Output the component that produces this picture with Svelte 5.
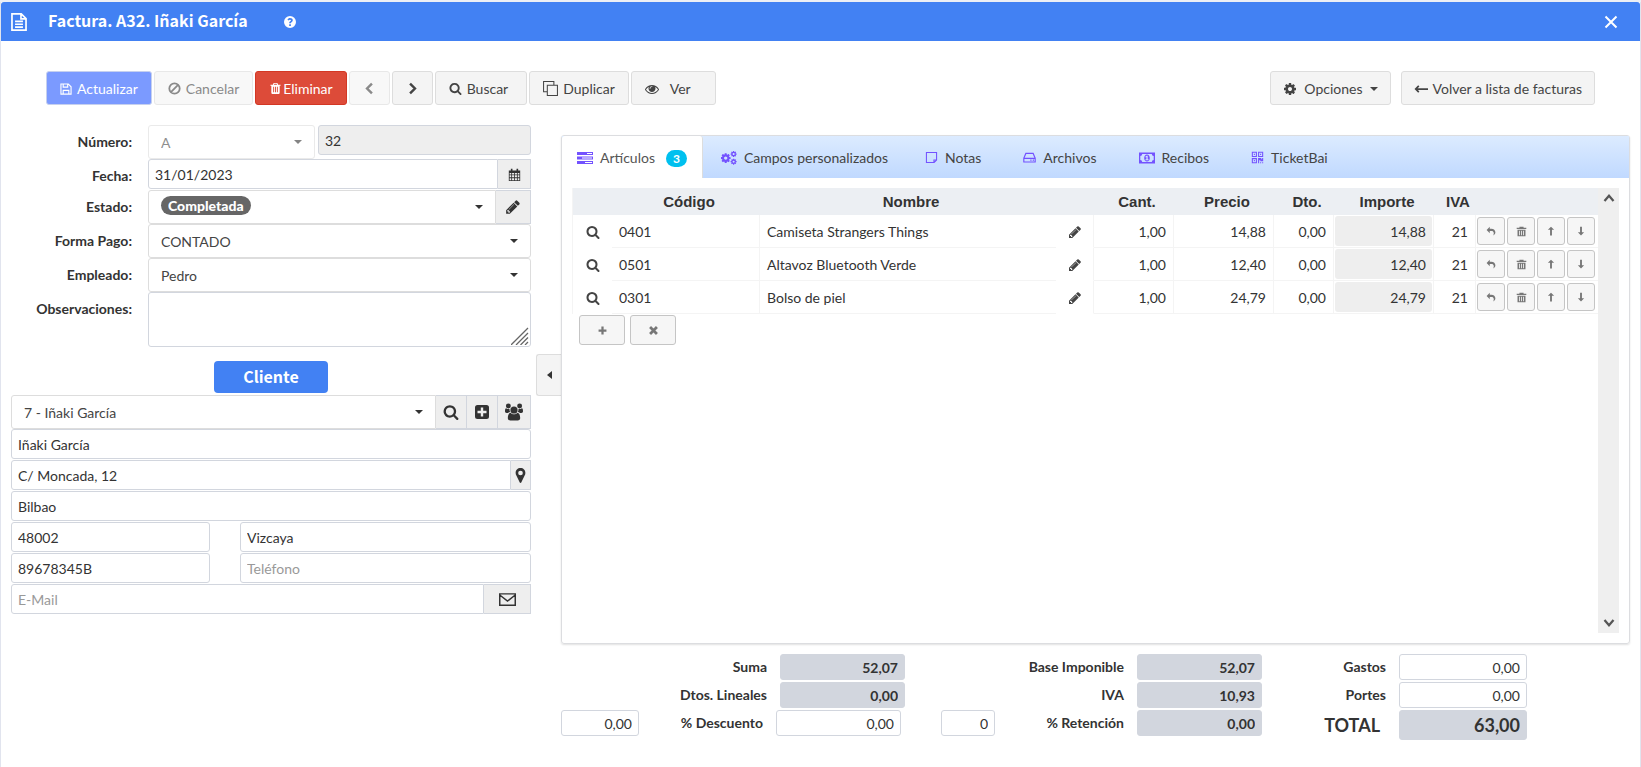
<script>
  const lines = [
    { code: '0401', name: 'Camiseta Strangers Things', qty: '1,00', price: '14,88', disc: '0,00', total: '14,88', vat: '21' },
    { code: '0501', name: 'Altavoz Bluetooth Verde', qty: '1,00', price: '12,40', disc: '0,00', total: '12,40', vat: '21' },
    { code: '0301', name: 'Bolso de piel', qty: '1,00', price: '24,79', disc: '0,00', total: '24,79', vat: '21' }
  ];

  const tabs = [
    { icon: 'tasks', label: 'Artículos', badge: 3 },
    { icon: 'cogs', label: 'Campos personalizados', wide: true },
    { icon: 'note', label: 'Notas' },
    { icon: 'drive', label: 'Archivos' },
    { icon: 'money', label: 'Recibos' },
    { icon: 'qr', label: 'TicketBai' }
  ];

  const rowActions = [
    { icon: 'undo', label: 'Deshacer' },
    { icon: 'bin', label: 'Borrar línea' },
    { icon: 'up', label: 'Subir' },
    { icon: 'down', label: 'Bajar' }
  ];

  // Solid glyphs, drawn on a 1792-unit grid
  const solid = {
    search: 'M1216 832q0-185-131.5-316.5t-316.5-131.5-316.5 131.5-131.5 316.5 131.5 316.5 316.5 131.5 316.5-131.5 131.5-316.5zm512 832q0 52-38 90t-90 38q-54 0-90-38l-343-342q-179 124-399 124-143 0-273.5-55.5t-225-150-150-225-55.5-273.5 55.5-273.5 150-225 225-150 273.5-55.5 273.5 55.5 225 150 150 225 55.5 273.5q0 220-124 399l343 343q37 37 37 90z',
    pencil: 'M491 1536l91-91-235-235-91 91v107h128v128h107zm523-928q0-22-22-22-10 0-17 7l-542 542q-7 7-7 17 0 22 22 22 10 0 17-7l542-542q7-7 7-17zm-54-192l416 416-832 832h-416v-416zm683 96q0 53-37 90l-166 166-416-416 166-165q36-38 90-38 53 0 91 38l235 234q37 39 37 91z',
    trash: 'M704 1376v-704q0-14-9-23t-23-9h-64q-14 0-23 9t-9 23v704q0 14 9 23t23 9h64q14 0 23-9t9-23zm256 0v-704q0-14-9-23t-23-9h-64q-14 0-23 9t-9 23v704q0 14 9 23t23 9h64q14 0 23-9t9-23zm256 0v-704q0-14-9-23t-23-9h-64q-14 0-23 9t-9 23v704q0 14 9 23t23 9h64q14 0 23-9t9-23zm-544-992h448l-48-117q-7-9-17-11h-317q-10 2-17 11zm928 32v64q0 14-9 23t-23 9h-96v948q0 83-47 143.5t-113 60.5h-832q-66 0-113-58.5t-47-141.5v-952h-96q-14 0-23-9t-9-23v-64q0-14 9-23t23-9h309l70-167q15-37 54-63t79-26h320q40 0 79 26t54 63l70 167h309q14 0 23 9t9 23z',
    eye: 'M1664 960q-152-236-381-353 61 104 61 225 0 185-131.5 316.5t-316.5 131.5-316.5-131.5-131.5-316.5q0-121 61-225-229 117-381 353 133 205 333.5 326.5t434.5 121.5 434.5-121.5 333.5-326.5zm-720-384q0-20-14-34t-34-14q-125 0-214.5 89.5t-89.5 214.5q0 20 14 34t34 14 34-14 14-34q0-86 61-147t147-61q20 0 34-14t14-34zm848 384q0 34-20 69-140 230-376.5 368.5t-499.5 138.5-499.5-139-376.5-368q-20-35-20-69t20-69q140-229 376.5-368t499.5-139 499.5 139 376.5 368q20 35 20 69z',
    cog: 'M1152 896q0-106-75-181t-181-75-181 75-75 181 75 181 181 75 181-75 75-181zm512-109v222q0 12-8 23t-20 13l-185 28q-19 54-39 91 35 50 107 138 10 12 10 25t-9 23q-27 37-99 108t-94 71q-12 0-26-9l-138-108q-44 23-91 38-16 136-29 186-7 28-36 28h-222q-14 0-24.5-8.5t-11.5-21.5l-28-184q-49-16-90-37l-141 107q-10 9-25 9-14 0-25-11-126-114-165-168-7-10-7-23 0-12 8-23 15-21 51-66.5t54-70.5q-27-50-41-99l-183-27q-13-2-21-12.5t-8-23.5v-222q0-12 8-23t19-13l186-28q14-46 39-92-40-57-107-138-10-12-10-24 0-10 9-23 26-36 98.5-107.5t94.5-71.5q13 0 26 10l138 107q44-23 91-38 16-136 29-186 7-28 36-28h222q14 0 24.5 8.5t11.5 21.5l28 184q49 16 90 37l142-107q9-9 24-9 13 0 25 10 129 119 165 170 7 8 7 22 0 12-8 23-15 21-51 66.5t-54 70.5q26 50 41 98l183 28q13 2 21 12.5t8 23.5z'
  };

  // Line glyphs on a 16-unit grid
  const stroked = {
    file: { w: 1.5, d: 'M1.75 .75H10L14.25 5V15.25H1.75zM9.75 1V5.25H14M4.5 7.5h7M4.5 10h7M4.5 12.5h7' },
    floppy: { w: 1.5, d: 'M1.25 1.25H11L14.75 5V14.75H1.25zM4.25 14.5V9.75h7.5v4.75M4.25 1.5v4h6v-4' },
    ban: { w: 2.2, d: 'M14.4 8a6.4 6.4 0 1 1-12.8 0a6.4 6.4 0 1 1 12.8 0zM3.6 12.4L12.4 3.6' },
    prev: { w: 3, d: 'M11 2L5 8l6 6' },
    next: { w: 3, d: 'M5 2l6 6-6 6' },
    copy: { w: 1.1, d: 'M4.6 4.6h10.8v10.8H4.6zM4.6 11.5h-4V.6h11v4' },
    back: { w: 2, d: 'M2 8H16M5.5 4.5L2 8l3.5 3.5' },
    close: { w: 2, d: 'M2.5 2.5l11 11M13.5 2.5l-11 11' },
    note: { w: 1.3, d: 'M1.75 1.75h12.5v9.5l-3 3h-9.500zM14 11h-3v3' },
    drive: { w: 1.4, d: 'M1 9l2.500-6h9L15 9M1 9h14v4.500H1zM9 11.300h1.500M12 11.300h1.500' },
    envelope: { w: 1.4, d: 'M.7 2.700h14.600v10.600H.7zM1 4l7 5.500L15 4' },
    plus: { w: 4, d: 'M8 1v14M1 8h14' },
    times: { w: 4, d: 'M3 3l10 10M13 3L3 13' },
    chevup: { w: 3, d: 'M2 12l6-7 6 7' },
    chevdown: { w: 3, d: 'M2 4l6 7 6-7' }
  };

  // Filled glyphs on a 16-unit grid
  const filled = {
    tasks: 'M0 2h16v3H0zM0 6.500h16v3H0zM0 11h16v3H0zM10 3v1h5V3zM5 7.500v1h10v-1zM8 12v1h7v-1z',
    help: 'M8 0a8 8 0 1 0 0 16A8 8 0 0 0 8 0zM6.900 11h2.300v2.300H6.900zM8 2.800c2.200 0 3.700 1.200 3.700 3 0 1.500-1 2.100-1.700 2.600-.6.400-.8.600-.8 1.400H6.900c0-1.600.7-2.200 1.500-2.700.6-.4.900-.6.900-1.200 0-.6-.5-1-1.300-1-.8 0-1.200.4-1.800 1.200L4.600 5C5.400 3.600 6.400 2.800 8 2.800z',
    marker: 'M8 0C5 0 2.800 2.200 2.800 5.200c0 1.200.4 2 .8 2.900L7.200 15.500c.3.600 1.300.6 1.600 0l3.600-7.400c.4-.9.800-1.700.8-2.900C13.200 2.200 11 0 8 0zM8 2.800a2.500 2.500 0 1 1 0 5a2.500 2.500 0 1 1 0-5z',
    addbox: 'M3.500 1h9A2.500 2.500 0 0 1 15 3.500v9a2.500 2.500 0 0 1-2.500 2.500h-9A2.500 2.500 0 0 1 1 12.500v-9A2.500 2.500 0 0 1 3.500 1zM6.800 3.500v3.300H3.500v2.400h3.300v3.300h2.400V9.200h3.300V6.800H9.200V3.500z',
    users: 'M8 3a3.200 3.200 0 1 1 0 6.400A3.200 3.200 0 0 1 8 3zM5 8.700c.8.900 1.800 1.400 3 1.400s2.200-.5 3-1.400c1.600.2 2.500 2 2.500 4.600 0 1.300-.8 2.200-2.200 2.200H4.700c-1.400 0-2.200-.9-2.200-2.200 0-2.600.9-4.400 2.500-4.600zM3 .500a2.200 2.200 0 1 1 0 4.400a2.200 2.200 0 0 1 0-4.400zM13 .500a2.200 2.200 0 1 1 0 4.400a2.200 2.200 0 0 1 0-4.400zM1 4.600c1 .8 2 .9 3 .7 0 1.300.2 2 .7 2.800-.8 0-1.500.3-2 .8H1.500C.5 8.900 0 8.300 0 7.400 0 6 .2 4.800 1 4.600zM15 4.600c-1 .8-2 .9-3 .7 0 1.300-.2 2-.7 2.800.8 0 1.500.3 2 .8h1.200c1 0 1.500-.6 1.500-1.500 0-1.400-.2-2.600-1-2.800z',
    calendar: 'M1 3h2.500V.8h2V3h5V.8h2V3H15v13H1zM2 6v2h2V6zM5 6v2h2.500V6zM8.500 6v2H11V6zM12 6v2h2V6zM2 9v2.500h2V9zM5 9v2.500h2.500V9zM8.500 9v2.500H11V9zM12 9v2.500h2V9zM2 12.500V15h2v-2.500zM5 12.500V15h2.500v-2.500zM8.500 12.500V15H11v-2.500zM12 12.500V15h2v-2.500z',
    money: 'M0 2.500h16v11H0zM3.200 4a2 2 0 0 1-1.900 1.900v4.200A2 2 0 0 1 3.200 12h9.600a2 2 0 0 1 1.900-1.900V5.900A2 2 0 0 1 12.800 4zM8 4.400c1.700 0 2.800 1.500 2.800 3.600S9.700 11.600 8 11.600 5.200 10.100 5.200 8 6.300 4.400 8 4.400zM7.600 5.700l-1.300 1 .5.700.6-.4v2.300h-.9v.9h3v-.9h-.8V5.700z',
    qr: 'M1 1h6.300v6.300H1zM2.300 2.300V6H6V2.300zM3.500 3.500h1.300v1.300H3.500zM8.700 1H15v6.300H8.700zM10 2.300V6h3.700V2.300zM11.200 3.500h1.300v1.300h-1.300zM1 8.700h6.300V15H1zM2.300 10v3.700H6V10zM3.500 11.200h1.300v1.300H3.500zM8.700 8.700h4v1.300h1V8.700H15v4h-3.500v-1.300H10V15H8.700zM11.200 13.700h1.300V15h-1.300zM13.700 13.700H15V15h-1.300z',
    undo: 'M6 1v3.200h2.500C12.500 4.200 15 6.500 15 10c0 2.300-1 4-3.500 5 1.800-2.500 1.200-7-2.500-7H6v3.500L1 6.500z',
    bin: 'M5 1h6v1.500h4V4.300H1V2.500h4zM2.200 5.500h11.600V15H2.200zM4.500 7v6.500h1.200V7zM7.400 7v6.500h1.200V7zM10.300 7v6.500h1.200V7z',
    up: 'M8 1l5 5H9.500v9h-3V6H3z',
    down: 'M8 15l5-5H9.500V1h-3v9H3z'
  };
</script>

{#snippet icon(name, size = 14)}
  {#if solid[name]}
    <svg class="icon" width={size} height={size} viewBox="0 0 1792 1792" fill="currentColor" aria-hidden="true"><path d={solid[name]} /></svg>
  {:else if stroked[name]}
    <svg class="icon" width={size} height={size} viewBox="0 0 16 16" fill="none" stroke="currentColor" stroke-width={stroked[name].w} aria-hidden="true"><path d={stroked[name].d} /></svg>
  {:else if filled[name]}
    <svg class="icon" width={size} height={size} viewBox="0 0 16 16" fill="currentColor" fill-rule="evenodd" aria-hidden="true"><path d={filled[name]} /></svg>
  {:else if name === 'cogs'}
    <svg class="icon" width={size} height={size} viewBox="0 0 1792 1792" fill="currentColor" aria-hidden="true">
      <path transform="translate(-120 260) scale(.72)" d={solid.cog} />
      <path transform="translate(1020 60) scale(.44)" d={solid.cog} />
      <path transform="translate(1020 910) scale(.44)" d={solid.cog} />
    </svg>
  {/if}
{/snippet}

<div class="window">
  <header class="titlebar">
    {@render icon('file', 18)}
    <h1>Factura. A32. Iñaki García</h1>
    <button class="bare" aria-label="Ayuda">{@render icon('help', 12)}</button>
    <button class="bare close" aria-label="Cerrar">{@render icon('close', 16)}</button>
  </header>

  <div class="toolbar">
    <div class="tools">
      <button class="btn primary" disabled>{@render icon('floppy', 12)}Actualizar</button>
      <button class="btn faded" disabled>{@render icon('ban', 13)}Cancelar</button>
      <button class="btn danger">{@render icon('trash', 13)}Eliminar</button>
      <button class="btn faded step" disabled aria-label="Anterior">{@render icon('prev', 13)}</button>
      <button class="btn step" aria-label="Siguiente">{@render icon('next', 13)}</button>
      <button class="btn find">{@render icon('search', 13)}Buscar</button>
      <button class="btn">{@render icon('copy', 15)}Duplicar</button>
      <button class="btn view">{@render icon('eye', 14)}Ver</button>
    </div>
    <div class="menus">
      <button class="btn options">{@render icon('cog', 14)}Opciones<i class="caret"></i></button>
      <button class="btn">{@render icon('back', 14)}Volver a lista de facturas</button>
    </div>
  </div>

  <main class="body">
    <section class="invoice">
      <div class="field">
        <label for="serie">Número:</label>
        <div class="pair">
          <div class="select off"><select id="serie" disabled><option>A</option></select></div>
          <input class="locked" aria-label="Número de factura" value="32" readonly />
        </div>
      </div>
      <div class="field low">
        <label for="fecha">Fecha:</label>
        <div class="group">
          <input id="fecha" value="31/01/2023" />
          <button class="addon cal" aria-label="Calendario">{@render icon('calendar', 13)}</button>
        </div>
      </div>
      <div class="field">
        <label for="estado">Estado:</label>
        <div class="group">
          <div class="select"><select id="estado" class="pill"><option>Completada</option></select></div>
          <button class="addon edit" aria-label="Editar estado">{@render icon('pencil', 16)}</button>
        </div>
      </div>
      <div class="field">
        <label for="pago">Forma Pago:</label>
        <div class="select"><select id="pago"><option>CONTADO</option></select></div>
      </div>
      <div class="field">
        <label for="empleado">Empleado:</label>
        <div class="select"><select id="empleado"><option>Pedro</option></select></div>
      </div>
      <div class="field">
        <label for="obs">Observaciones:</label>
        <div class="memo">
          <textarea id="obs"></textarea>
          <svg width="18" height="18" viewBox="0 0 18 18" stroke="#666" stroke-width="1.300" aria-hidden="true"><path d="M0 18L17 1M5 18L17 6M9.500 18L17 10.500M14 18l3-3" /></svg>
        </div>
      </div>

      <h2>Cliente</h2>

      <div class="client">
        <div class="group">
          <div class="select"><select aria-label="Cliente"><option>7 - Iñaki García</option></select></div>
          <button class="addon" aria-label="Buscar cliente">{@render icon('search', 16)}</button>
          <button class="addon" aria-label="Nuevo cliente">{@render icon('addbox', 16)}</button>
          <button class="addon cal" aria-label="Ficha del cliente">{@render icon('users', 18)}</button>
        </div>
        <input aria-label="Nombre" value="Iñaki García" />
        <div class="group">
          <input aria-label="Dirección" value="C/ Moncada, 12" />
          <button class="addon pin" aria-label="Mapa">{@render icon('marker', 15)}</button>
        </div>
        <input aria-label="Población" value="Bilbao" />
        <div class="split">
          <input aria-label="Código postal" value="48002" />
          <input aria-label="Provincia" value="Vizcaya" />
          <input aria-label="NIF" value="89678345B" />
          <input aria-label="Teléfono" placeholder="Teléfono" />
        </div>
        <div class="group">
          <input aria-label="E-Mail" placeholder="E-Mail" />
          <button class="addon mail" aria-label="Enviar correo">{@render icon('envelope', 17)}</button>
        </div>
      </div>
    </section>

    <button class="collapse" aria-label="Contraer"><i class="caret left"></i></button>

    <section class="detail">
      <div class="panel">
        <div class="tabs" role="tablist">
          {#each tabs as tab, i}
            <button class="tab" class:active={i === 0} class:wide={tab.wide} role="tab" aria-selected={i === 0}>
              {@render icon(tab.icon, tab.icon === 'note' || tab.icon === 'drive' || tab.icon === 'qr' ? 13 : 16)}
              <span>{tab.label}</span>
              {#if tab.badge}<b class="badge">{tab.badge}</b>{/if}
            </button>
          {/each}
        </div>
        <div class="sheet">
          <div class="lines">
            <table>
              <colgroup>
                <col class="c-find" /><col class="c-code" /><col /><col class="c-edit" /><col class="c-qty" /><col class="c-price" />
                <col class="c-disc" /><col class="c-price" /><col class="c-vat" /><col class="c-act" />
              </colgroup>
              <thead>
                <tr>
                  <th></th><th>Código</th><th>Nombre</th><th></th><th>Cant.</th><th>Precio</th><th>Dto.</th><th>Importe</th><th>IVA</th><th></th>
                </tr>
              </thead>
              <tbody>
                {#each lines as line}
                  <tr>
                    <td class="tool"><button class="bare" aria-label="Buscar artículo">{@render icon('search', 14)}</button></td>
                    <td class="text rule">{line.code}</td>
                    <td class="text">{line.name}</td>
                    <td class="tool rule"><button class="bare" aria-label="Editar artículo">{@render icon('pencil', 14)}</button></td>
                    <td class="text num rule">{line.qty}</td>
                    <td class="text num rule">{line.price}</td>
                    <td class="text num rule">{line.disc}</td>
                    <td class="amount rule"><span>{line.total}</span></td>
                    <td class="text num rule">{line.vat}</td>
                    <td class="actions">
                      <div>
                        {#each rowActions as action}
                          <button class="mini" aria-label={action.label}>{@render icon(action.icon, action.icon === 'bin' ? 11 : 10)}</button>
                        {/each}
                      </div>
                    </td>
                  </tr>
                {/each}
              </tbody>
            </table>
            <div class="add">
              <button class="mini big" aria-label="Añadir línea">{@render icon('plus', 9)}</button>
              <button class="mini big" aria-label="Quitar líneas">{@render icon('times', 11)}</button>
            </div>
          </div>
          <div class="scroll">
            {@render icon('chevup', 12)}
            {@render icon('chevdown', 12)}
          </div>
        </div>
      </div>

      <div class="totals">
        <div class="sums">
          <div class="sum"><label for="suma">Suma</label><input id="suma" class="calc" value="52,07" readonly /></div>
          <div class="sum"><label for="lineales">Dtos. Lineales</label><input id="lineales" class="calc" value="0,00" readonly /></div>
          <div class="sum inset">
            <input class="rate" aria-label="Porcentaje de descuento" value="0,00" />
            <label for="descuento">% Descuento</label><input id="descuento" value="0,00" />
          </div>
        </div>
        <div class="sums middle">
          <div class="sum"><label for="base">Base Imponible</label><input id="base" class="calc" value="52,07" readonly /></div>
          <div class="sum"><label for="iva">IVA</label><input id="iva" class="calc" value="10,93" readonly /></div>
          <div class="sum">
            <input class="rate short" aria-label="Porcentaje de retención" value="0" />
            <label for="retencion">% Retención</label><input id="retencion" class="calc" value="0,00" readonly />
          </div>
        </div>
        <div class="sums">
          <div class="sum"><label for="gastos">Gastos</label><input id="gastos" value="0,00" /></div>
          <div class="sum"><label for="portes">Portes</label><input id="portes" value="0,00" /></div>
          <div class="sum grand"><label for="total">TOTAL</label><input id="total" class="calc" value="63,00" readonly /></div>
        </div>
      </div>
    </section>
  </main>
</div>

<style>
  :global(body) { margin: 0; background: #eceff5; }
  .window, .window * { box-sizing: border-box; }
  .window {
    min-height: calc(100vh - 2px);
    margin-top: 2px;
    border: solid #e1e4ee;
    border-width: 0 1px;
    background: #fff;
    color: #333;
    font: 14px/20px Lato, sans-serif;
  }
  button, input, select, textarea { font: inherit; color: inherit; margin: 0; }
  .icon { display: block; flex: none; }
  .bare { border: 0; background: none; padding: 0; display: inline-flex; }
  .caret { width: 0; height: 0; border: 4px solid transparent; border-top-color: currentColor; border-bottom: 0; }
  .caret.left { border: 4px solid transparent; border-right: 5px solid currentColor; border-left: 0; }

  .titlebar {
    display: flex;
    align-items: center;
    height: 39px;
    padding: 0 21px 0 9px;
    border-radius: 3px 3px 0 0;
    background: #4281f3;
    color: #fff;
  }
  h1, h2 { font-family: "Noto Sans CJK SC", "Noto Sans", sans-serif; font-weight: 700; font-size: 16px; }
  h1 { margin: 0 36px 4px 20px; line-height: 34px; }
  .close { margin-left: auto; }

  .toolbar { display: flex; justify-content: space-between; padding: 30px 45px 0; }
  .tools { display: flex; gap: 2px; }
  .menus { display: flex; gap: 10px; }
  .btn {
    display: flex;
    align-items: center;
    justify-content: center;
    gap: 5px;
    height: 34px;
    padding: 1px 12px 0;
    border: 1px solid #ddd;
    border-radius: 3px;
    background: #f4f4f4;
    color: #444;
    white-space: nowrap;
  }
  .tools .btn { padding: 1px 13px 0; }
  .primary { background: #7b9aff; border-color: #c6d0ee; color: #fff; }
  .faded { background: #f8f8f8; border-color: #e8e8e8; color: #8a8a8a; }
  .danger { background: #dd4b39; border-color: #d33724; color: #fff; gap: 1px; }
  .tools .step { width: 41px; padding: 0; }
  .tools .find { padding-right: 18px; }
  .tools .view { gap: 11px; padding-right: 24px; }
  .options { gap: 7px; }

  .body { display: grid; grid-template-columns: minmax(0, 520fr) 30px minmax(0, 1069fr); align-items: start; padding: 20px 10px 0; }

  .field { display: grid; grid-template-columns: 137fr 383fr; align-items: start; }
  .field > label { height: 34px; padding-right: 16px; line-height: 34px; text-align: right; font-weight: 700; white-space: nowrap; }
  .low > label { height: 31px; }
  input, textarea {
    display: block;
    width: 100%;
    min-width: 0;
    height: 30px;
    padding: 0 6px;
    border: 1px solid #d2d6de;
    border-radius: 3px;
    background: #fff;
    outline: 0;
  }
  input::placeholder { color: #999; opacity: 1; }
  .locked { background: #eee; }
  .pair { display: grid; grid-template-columns: 167fr 213fr; gap: 3px; }
  .group { display: flex; }
  .group > input, .group > .select { flex: 1; border-top-right-radius: 0; border-bottom-right-radius: 0; }
  .select { position: relative; display: flex; align-items: center; height: 34px; border: 1px solid #ddd; border-radius: 3px; background: #fff; }
  .select::after {
    content: "";
    position: absolute;
    right: 12px;
    top: 14px;
    border: 4px solid transparent;
    border-top-color: #333;
    border-bottom: 0;
    pointer-events: none;
  }
  .select.off { opacity: .6; }
  select { appearance: none; width: 100%; height: 32px; padding: 1px 12px 0; border: 0; background: none; color: #444; opacity: 1; }
  select.pill { width: auto; height: 19px; margin-left: 12px; margin-bottom: 3px; padding: 0 7px; border-radius: 10px; background: #666; color: #fff; font-weight: 900; line-height: 19px; }
  .addon { display: flex; align-items: center; justify-content: center; width: 31px; padding: 0; border: 1px solid #d2d6de; border-left-width: 0; background: #eee; color: #333; }
  .cal { width: 33px; }
  .edit { width: 35px; }
  .pin { width: 20px; }
  .mail { width: 47px; }
  .memo { position: relative; }
  textarea { height: 55px; resize: none; }
  .memo svg { position: absolute; right: 2px; bottom: 2px; fill: none; }

  h2 { width: fit-content; margin: 14px auto 2px; padding: 0 29px 2px; border-radius: 4px; background: #4281f3; color: #fff; line-height: 30px; }
  .client { display: grid; gap: 1px; }
  .client > .group:first-child { margin-bottom: -1px; }
  .split { display: grid; grid-template-columns: 199fr 291fr; gap: 1px 30px; }

  .collapse { display: flex; align-items: center; justify-content: center; width: 26px; height: 42px; margin: 229px 0 0 5px; border: 1px solid #ddd; border-right: 0; border-radius: 3px 0 0 3px; background: #f4f4f4; color: #333; padding: 0; }

  .detail { padding-top: 10px; }
  .panel { border: 1px solid #dcdde0; border-radius: 3px; box-shadow: 0 1px 2px rgba(0, 0, 0, .12); }
  .tabs { display: flex; height: 42px; background: linear-gradient(#dcebff, #c0d9ff); color: #444; }
  .tab { display: flex; align-items: center; gap: 7px; padding: 1px 21px 0; border: 0; background: none; white-space: nowrap; }
  .tab .icon { color: #7352ff; }
  .tab.active { padding: 1px 15px 0; border-right: 1px solid #ddd; border-radius: 3px 3px 0 0; background: #fff; color: #555; }
  .tab.wide { padding: 1px 16px 0 18px; }
  .badge { margin: 2px 0 0 4px; padding: 0 7px; border-radius: 9px; background: #00c0ef; color: #fff; font-size: 12px; line-height: 17px; }

  .sheet { display: flex; height: 465px; padding: 10px; }
  .lines { flex: 1; min-width: 0; }
  .scroll { display: flex; flex-direction: column; justify-content: space-between; align-items: center; width: 21px; padding: 4px 0; background: #efefef; color: #555; }
  table { width: 100%; table-layout: fixed; border-collapse: separate; border-spacing: 0; border-left: 1px solid #f4f4f4; }
  .c-find { width: 39px; }
  .c-code { width: 148px; }
  .c-edit { width: 38px; }
  .c-qty { width: 80px; }
  .c-price { width: 100px; }
  .c-disc { width: 60px; }
  .c-vat { width: 42px; }
  .c-act { width: 122px; }
  th { height: 27px; padding: 0 0 0 6px; background: #eceff3; font: 700 15px/26px "Liberation Sans", Arial, sans-serif; text-align: center; }
  td { height: 33px; padding: 0; border-bottom: 1px solid #f4f4f4; white-space: nowrap; }
  .text { padding: 2px 7px 0; }
  .rule { border-right: 1px solid #f4f4f4; }
  .tool { border-bottom-color: transparent; text-align: center; color: #444; }
  .tool .bare { vertical-align: middle; }
  .num { text-align: right; }
  .amount { padding: 0 1px; text-align: right; }
  .amount span { display: block; height: 30px; padding: 0 6px; border-radius: 3px; background: #eee; line-height: 32px; }
  .actions { padding: 0 1px; }
  .actions div, .add { display: flex; gap: 2px; }
  .mini { display: flex; align-items: center; justify-content: center; width: 28px; height: 28px; padding: 0; border: 1px solid #c5c5c5; border-radius: 3px; background: #f6f6f6; color: #777; }
  .add { gap: 5px; padding: 1px 7px; }
  .big { width: 46px; height: 30px; }

  .totals { display: grid; grid-template-columns: 344fr 357fr 265fr 103fr; padding-top: 10px; }
  .sums { display: grid; gap: 2px; align-content: start; }
  .sum { display: flex; justify-content: flex-end; align-items: center; }
  .inset { padding-right: 4px; }
  .sum label { padding-right: 13px; font-weight: 700; white-space: nowrap; }
  .sum input { width: 125px; height: 26px; text-align: right; }
  .sum .rate { width: 78px; margin-right: auto; }
  .sum .short { width: 54px; }
  .middle { padding-left: 36px; }
  .sum .calc { border-color: #d2d6de; background: #d2d6de; font-weight: 700; }
  .sums:last-child input { width: 128px; }
  .grand label { padding-right: 19px; font-size: 18px; }
  .sum.grand .calc { height: 30px; font-size: 18px; }
</style>
